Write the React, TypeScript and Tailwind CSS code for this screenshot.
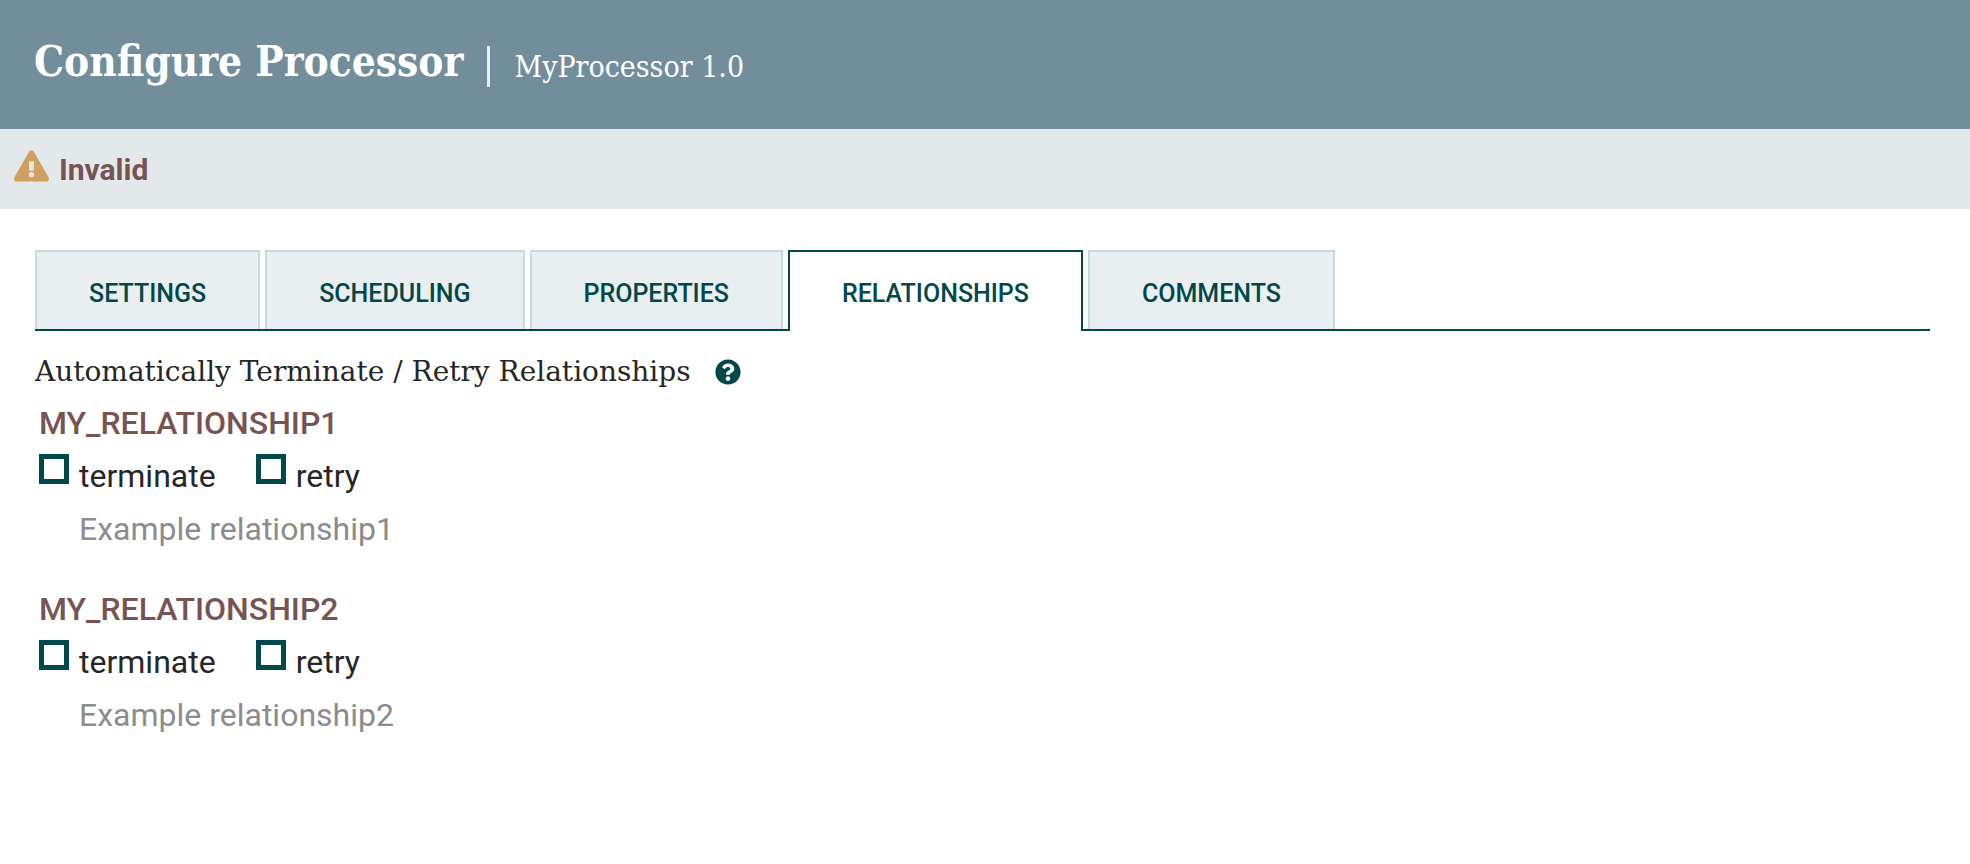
import React, { useState, SetStateAction } from "react";
import { FaExclamationTriangle, FaQuestionCircle } from "react-icons/fa";

// Tab Button Type Interface
interface TabButtonType {
  name: string;
  mapIdx: number;
  tabIdx: number;
  setTabIdx: React.Dispatch<SetStateAction<number>>;
}

// Tab Button Component
const TabButton = ({ name, mapIdx, tabIdx, setTabIdx }: TabButtonType) => {
  return (
    <button
      type="button"
      role="tab"
      aria-selected={tabIdx === mapIdx}
      className={`${
        tabIdx === mapIdx
          ? "-mb-[2px] h-[81px] pt-1 bg-white border-[#004849]"
          : "h-[79px] pt-[6px] bg-[#e9eef0] border-[#c7d9da]"
      } border-2 border-b-0 px-[52px] text-[25px] font-medium text-[#004849]`}
      onClick={() => setTabIdx(mapIdx)}
    >
      {name}
    </button>
  );
};

// Checkbox Component
const CheckOption = ({ id, name }: { id: string; name: string }) => {
  return (
    <div className="flex items-start">
      <input
        type="checkbox"
        id={id}
        className="h-[30px] w-[30px] appearance-none border-[5px] border-[#004849] bg-white checked:bg-[#728e9b]"
      />
      <label htmlFor={id} className="ml-[10px] pt-1 text-[32px] leading-9 text-[#262626]">
        {name}
      </label>
    </div>
  );
};

// Relationship Component
const Relationship = ({ name, description }: { name: string; description: string }) => {
  return (
    <section className="mb-10 pl-1">
      <h2 className="text-[32px] font-medium leading-10 text-[#775351]">{name}</h2>
      <div className="mt-[11px] flex gap-10">
        <CheckOption id={`${name}-terminate`} name="terminate" />
        <CheckOption id={`${name}-retry`} name="retry" />
      </div>
      <p className="mt-[15px] pl-10 text-[32px] leading-10 text-[#8c8c8c]">{description}</p>
    </section>
  );
};

const TabList = ["SETTINGS", "SCHEDULING", "PROPERTIES", "RELATIONSHIPS", "COMMENTS"];

const RelationshipList = [
  { name: "MY_RELATIONSHIP1", description: "Example relationship1" },
  { name: "MY_RELATIONSHIP2", description: "Example relationship2" },
];

// Configure Processor Dialog
const App = () => {
  const [tabIdx, setTabIdx] = useState<number>(3);

  return (
    <div className="min-h-screen bg-white font-['Roboto',sans-serif]">
      <header className="flex h-[129px] items-start bg-[#728e9b] pl-[34px] pt-[35px] font-['Roboto_Slab','DejaVu_Serif_Condensed','DejaVu_Serif',serif] text-white">
        <h1 className="text-[42px] font-bold leading-[54px]">Configure Processor</h1>
        <div className="ml-6 mt-[11px] h-[41px] w-[3px] bg-[#e9eef0]" />
        <span className="ml-6 pt-[14px] text-[30px] leading-9">MyProcessor 1.0</span>
      </header>
      <div className="flex h-20 items-center bg-[#e3e8eb] pl-[14px]">
        <FaExclamationTriangle className="-mt-[6px] h-[34px] w-[35px] text-[#cf9f5d]" />
        <span className="ml-[10px] text-[30px] font-bold text-[#775351]">Invalid</span>
      </div>
      <main className="px-[35px] pt-[41px]">
        <div role="tablist" className="mr-[5px] flex gap-[5px] border-b-2 border-[#004849]">
          {TabList.map((tab, idx) => (
            <TabButton
              name={tab}
              mapIdx={idx}
              tabIdx={tabIdx}
              setTabIdx={setTabIdx}
              key={idx}
            />
          ))}
        </div>
        <div className="mt-[21px] flex items-center font-['Roboto_Slab','DejaVu_Serif',serif] text-[28px] leading-10 text-[#262626]">
          Automatically Terminate / Retry Relationships
          <button type="button" aria-label="Help" className="ml-6 text-[#004849]">
            <FaQuestionCircle size={26} />
          </button>
        </div>
        <div className="mt-[11px]">
          {RelationshipList.map((item) => (
            <Relationship name={item.name} description={item.description} key={item.name} />
          ))}
        </div>
      </main>
    </div>
  );
};

export default App;
